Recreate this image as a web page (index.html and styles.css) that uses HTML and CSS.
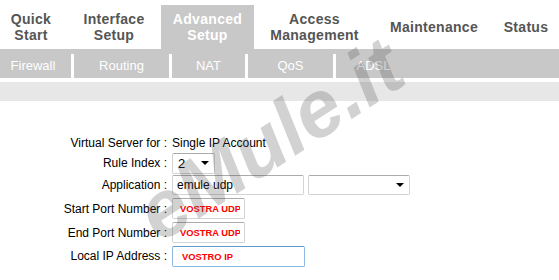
FILE: index.html
```html
<!DOCTYPE html>
<html lang="en">
<head>
    <meta charset="UTF-8">
    <title>Advanced Setup - NAT</title>
    <link rel="stylesheet" href="styles.css">
</head>
<body>
    <div class="page">
        <!-- main menu -->
        <nav class="topnav">
            <a class="tab tab-quick">Quick<br>Start</a>
            <a class="tab tab-iface">Interface<br>Setup</a>
            <a class="tab tab-adv active">Advanced<br>Setup</a>
            <a class="tab tab-access">Access<br>Management</a>
            <a class="tab tab-maint">Maintenance</a>
            <a class="tab tab-status">Status</a>
        </nav>

        <!-- sub menu -->
        <div class="subnav">
            <a class="sub sub-fw">Firewall</a><span class="sep"></span>
            <a class="sub sub-rt">Routing</a><span class="sep"></span>
            <a class="sub sub-nat">NAT</a><span class="sep"></span>
            <a class="sub sub-qos">QoS</a><span class="sep"></span>
            <a class="sub sub-adsl">ADSL</a>
        </div>
        <div class="band"></div>

        <form class="vs-form">
            <label class="lbl">Virtual Server for :</label>
            <div class="val">Single IP Account</div>

            <label class="lbl">Rule Index :</label>
            <div class="val">
                <span class="sel-wrap sel-rule">
                    <select class="sel"><option>2</option></select>
                </span>
            </div>

            <label class="lbl">Application :</label>
            <div class="val">
                <input class="inp inp-app" type="text" value="emule udp">
                <span class="sel-wrap sel-app">
                    <select class="sel"><option></option></select>
                </span>
            </div>

            <label class="lbl">Start Port Number :</label>
            <div class="val"><input class="inp inp-port red" type="text" value="VOSTRA UDP"></div>

            <label class="lbl">End Port Number :</label>
            <div class="val"><input class="inp inp-port red" type="text" value="VOSTRA UDP"></div>

            <label class="lbl">Local IP Address :</label>
            <div class="val"><input class="inp inp-ip red" type="text" value="VOSTRO IP"></div>
        </form>

        <div class="watermark">eMule.it</div>
    </div>
</body>
</html>
```

FILE: styles.css
```css
* { margin: 0; padding: 0; box-sizing: border-box; }
body { font-family: 'Liberation Sans', Arial, sans-serif; background: #fff; color: #000; overflow: hidden; }
.page { position: relative; width: 559px; height: 280px; overflow: hidden; }

/* main menu */
.topnav { display: flex; align-items: flex-end; height: 49px; }
.tab { display: flex; align-items: center; justify-content: center; height: 44px; text-align: center; font-size: 14px; font-weight: bold; line-height: 16px; letter-spacing: 0.3px; color: #555; }
.tab.active { background: #c8c8c8; color: #fff; }
.tab-quick { width: 62px; }
.tab-iface { width: 99px; padding-left: 5px; }
.tab-adv { width: 93px; }
.tab-access { width: 121px; }
.tab-maint { width: 118px; }
.tab-status { width: 66px; }

/* sub menu */
.subnav { display: flex; height: 29px; background: #c8c8c8; }
.sub { display: flex; align-items: center; justify-content: center; font-size: 13px; color: #fff; padding-top: 3px; }
.sep { width: 3px; height: 24px; align-self: flex-end; background: #fff; }
.sub-fw { width: 71px; padding-right: 5px; }
.sub-rt { width: 95px; }
.sub-nat { width: 73px; }
.sub-qos { width: 85px; }
.sub-adsl { width: 75px; }
.band { height: 19px; margin-top: 4px; background: #e7e7e7; }

/* form */
.vs-form { display: grid; grid-template-columns: 167px auto; grid-template-rows: 19px 22px 22px 25px 23px 24px; column-gap: 5px; padding-top: 32px; font-size: 12px; }
.lbl { justify-self: end; align-self: center; white-space: nowrap; }
.val { display: flex; align-items: center; gap: 4px; }
.inp { font-family: 'Liberation Sans', Arial, sans-serif; font-size: 12px; color: #000; border: 1px solid #d3d3d3; border-top-color: #ababab; border-radius: 2px; padding: 0 4px; background: #fff; outline: none; }
.inp-app { width: 132px; height: 20px; }
.inp-port { width: 73px; height: 21px; padding-left: 7px; }
.inp-ip { width: 133px; height: 21px; padding-left: 9px; border-color: #8cb9e3; border-top-color: #5f97cf; }
.inp.red { color: #f00; font-weight: bold; font-size: 9.4px; }

.sel-wrap { position: relative; display: block; }
.sel { display: block; width: 100%; height: 100%; appearance: none; -webkit-appearance: none; font-family: 'Liberation Sans', Arial, sans-serif; font-size: 13px; color: #000; background: #fff; border: 1px solid #d3d3d3; border-top-color: #ababab; border-radius: 2px; padding: 0 5px; outline: none; }
.sel-wrap::after { content: ''; position: absolute; top: 50%; margin-top: -2px; right: 6px; border-left: 4px solid transparent; border-right: 4px solid transparent; border-top: 4px solid #000; }
.sel-rule { width: 43px; height: 21px; }
.sel-app { width: 102px; height: 20px; }

/* watermark */
.watermark { position: absolute; left: 270px; top: 140px; transform: translate(-50%, -50%) rotate(-33deg); font-size: 80px; font-weight: bold; font-style: italic; line-height: 1; color: rgba(80, 80, 80, 0.26); white-space: nowrap; pointer-events: none; }
```
